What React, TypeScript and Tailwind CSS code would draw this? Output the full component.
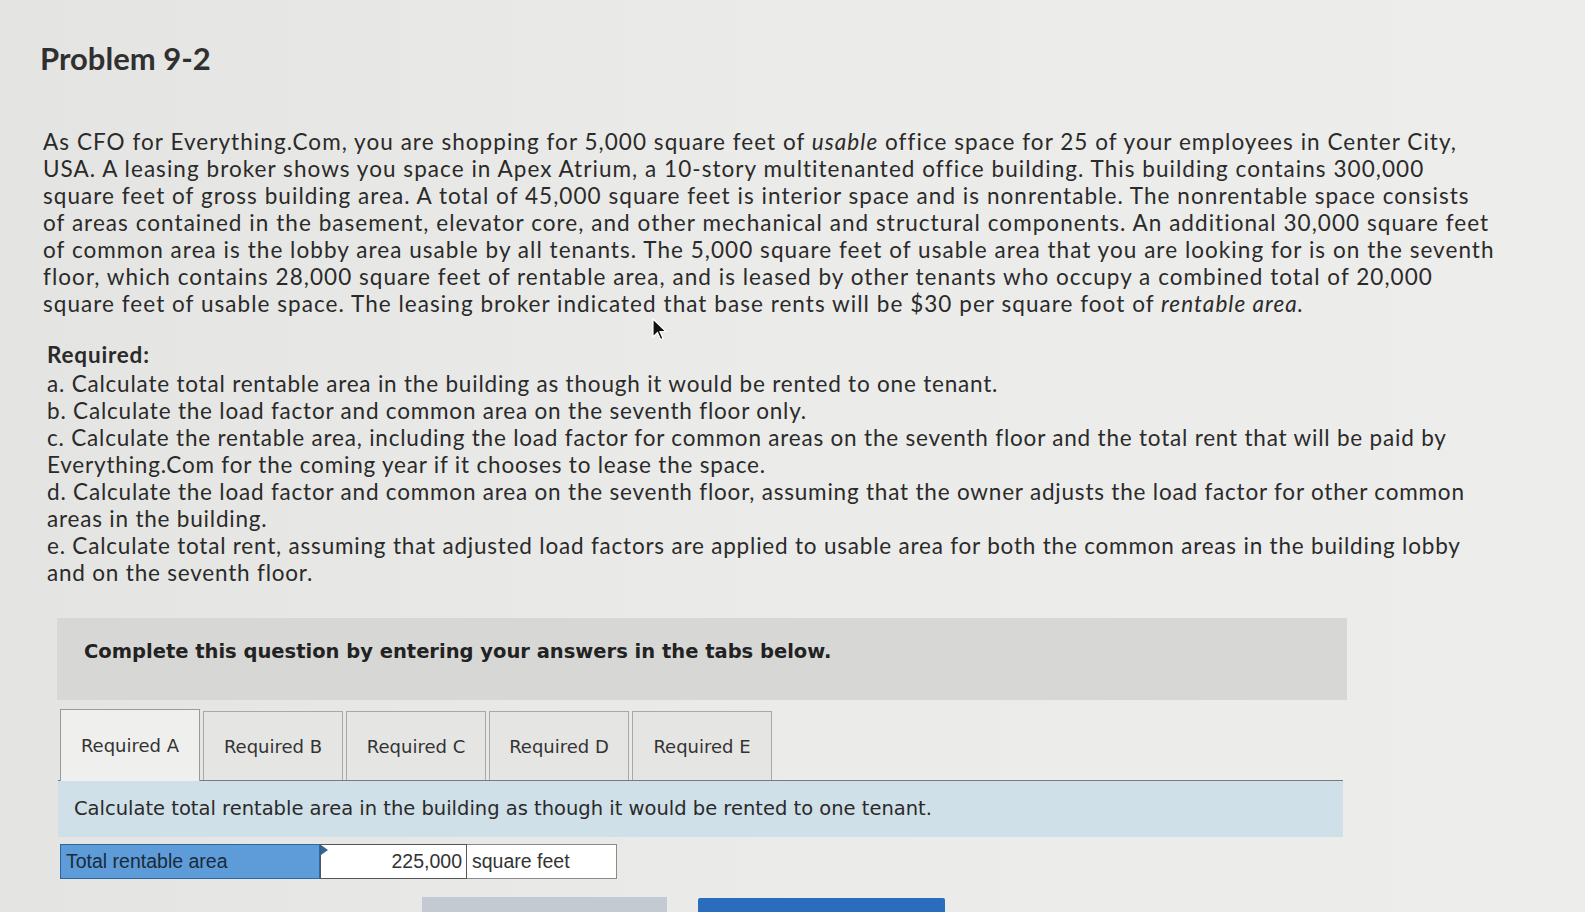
import React, { useState } from "react";

const PARAGRAPH: React.ReactNode[] = [
  <>As CFO for Everything.Com, you are shopping for 5,000 square feet of <i>usable</i> office space for 25 of your employees in Center City,</>,
  <>USA. A leasing broker shows you space in Apex Atrium, a 10-story multitenanted office building. This building contains 300,000</>,
  <>square feet of gross building area. A total of 45,000 square feet is interior space and is nonrentable. The nonrentable space consists</>,
  <>of areas contained in the basement, elevator core, and other mechanical and structural components. An additional 30,000 square feet</>,
  <>of common area is the lobby area usable by all tenants. The 5,000 square feet of usable area that you are looking for is on the seventh</>,
  <>floor, which contains 28,000 square feet of rentable area, and is leased by other tenants who occupy a combined total of 20,000</>,
  <>square feet of usable space. The leasing broker indicated that base rents will be $30 per square foot of <i>rentable area.</i></>,
];

const REQUIRED = [
  "a. Calculate total rentable area in the building as though it would be rented to one tenant.",
  "b. Calculate the load factor and common area on the seventh floor only.",
  "c. Calculate the rentable area, including the load factor for common areas on the seventh floor and the total rent that will be paid by",
  "Everything.Com for the coming year if it chooses to lease the space.",
  "d. Calculate the load factor and common area on the seventh floor, assuming that the owner adjusts the load factor for other common",
  "areas in the building.",
  "e. Calculate total rent, assuming that adjusted load factors are applied to usable area for both the common areas in the building lobby",
  "and on the seventh floor.",
];

const TABS = ["A", "B", "C", "D", "E"];

const Cursor = () => (
  <svg className="absolute left-[652px] top-[318px]" width="16" height="24" viewBox="0 0 16 24">
    <path d="M1 1 L1 19 L5.5 14.5 L8.5 21.5 L11 20.5 L8 13.5 L14 13.5 Z" fill="#111" stroke="#fff" strokeWidth="1.2" />
  </svg>
);

export default function App() {
  const [tab, setTab] = useState("A");

  return (
    <div className="relative min-h-screen w-full overflow-hidden bg-gradient-to-r from-[#e4e4e2] via-[#ebebe9] to-[#ededeb] pb-10 text-[#2a2a2a]">
      <h1 className="pl-[40px] pt-[40px] font-['Lato',sans-serif] text-[31px] font-bold leading-[36px] text-[#303030]">
        Problem 9-2
      </h1>

      <div className="mt-[52px] pl-[43px] font-['Lato',sans-serif] text-[22.5px] leading-[27px] tracking-[1.05px]">
        {PARAGRAPH.map((line, i) => (
          <div key={i} className="whitespace-nowrap">{line}</div>
        ))}
      </div>

      <div className="mt-[24px] pl-[47px] font-['Lato',sans-serif] text-[22.5px] leading-[27px] tracking-[0.8px]">
        <div className="mb-[2px] font-bold">Required:</div>
        {REQUIRED.map((line, i) => (
          <div key={i} className="whitespace-nowrap">{line}</div>
        ))}
      </div>

      <div className="ml-[57px] mt-[32px] h-[82px] w-[1290px] bg-[#d7d7d5] pl-[27px] pt-[22px] font-['DejaVu_Sans',sans-serif] text-[19.5px] font-bold leading-[24px] text-[#222]">
        Complete this question by entering your answers in the tabs below.
      </div>

      <div className="ml-[58px] mt-[9px] flex w-[1285px] items-end gap-[3px] border-b border-[#7a7a7a] pl-[2px] font-['DejaVu_Sans',sans-serif] text-[18px] text-[#333]">
        {TABS.map((t) => {
          const active = t === tab;
          return (
            <button
              key={t}
              onClick={() => setTab(t)}
              className={
                active
                  ? "-mb-px h-[72px] w-[140px] border border-b-0 border-[#9a9a9a] bg-[#efefed]"
                  : "h-[69px] w-[140px] border border-b-0 border-[#a8a8a8] bg-[#e5e5e3]"
              }
            >
              Required {t}
            </button>
          );
        })}
      </div>

      <div className="ml-[58px] flex h-[56px] w-[1285px] items-center bg-[#cfe0e8] pl-[16px] font-['DejaVu_Sans',sans-serif] text-[19.5px] text-[#2a2a2a]">
        Calculate total rentable area in the building as though it would be rented to one tenant.
      </div>

      <div className="ml-[60px] mt-[7px] flex h-[35px] font-['Liberation_Sans',sans-serif] text-[19.5px]">
        <div className="flex w-[260px] items-center border border-[#2d679f] bg-[#5d9cd8] pl-[5px] text-[#1c2a3a]">
          Total rentable area
        </div>
        <div className="relative flex w-[147px] items-center justify-end border border-[#555] bg-white pr-[4px] text-[#333]">
          <svg className="absolute left-0 top-0" width="8" height="10" viewBox="0 0 8 10">
            <path d="M0 0 L7 5 L0 10 Z" fill="#2d679f" />
          </svg>
          225,000
        </div>
        <div className="flex w-[150px] items-center border border-l-0 border-[#8a8a8a] bg-white pl-[5px] text-[#333]">
          square feet
        </div>
      </div>

      <div className="mt-[18px] flex items-start pl-[422px]">
        <div className="h-[30px] w-[245px] bg-[#c3cad2]" />
        <div className="ml-[31px] mt-[1px] h-[30px] w-[247px] rounded-t-[2px] bg-[#2a6cbd]" />
      </div>

      <Cursor />
    </div>
  );
}
